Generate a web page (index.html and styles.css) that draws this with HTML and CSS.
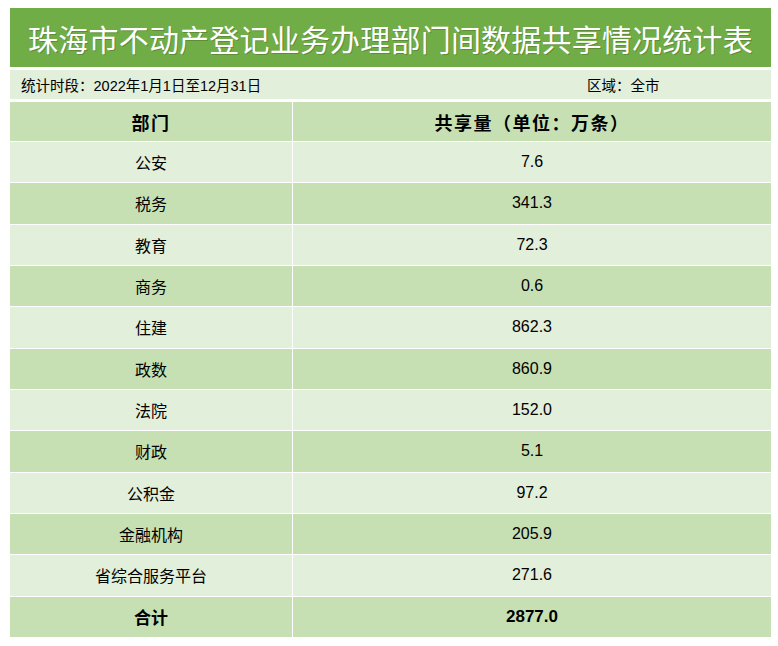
FILE: index.html
```html
<!DOCTYPE html>
<html lang="zh-CN">
<head>
<meta charset="utf-8">
<title>珠海市不动产登记业务办理部门间数据共享情况统计表</title>
<link rel="stylesheet" href="styles.css">
</head>
<body>
<div class="sheet">
  <div class="title">珠海市不动产登记业务办理部门间数据共享情况统计表</div>
  <div class="info">
    <span class="period">统计时段：2022年1月1日至12月31日</span>
    <span class="area">区域：全市</span>
  </div>
  <div class="table">
    <div class="row head"><div class="cell">部门</div><div class="cell">共享量（单位：万条）</div></div>
    <div class="body">
      <div class="row light"><div class="cell">公安</div><div class="cell">7.6</div></div>
      <div class="row dark"><div class="cell">税务</div><div class="cell">341.3</div></div>
      <div class="row light"><div class="cell">教育</div><div class="cell">72.3</div></div>
      <div class="row dark"><div class="cell">商务</div><div class="cell">0.6</div></div>
      <div class="row light"><div class="cell">住建</div><div class="cell">862.3</div></div>
      <div class="row dark"><div class="cell">政数</div><div class="cell">860.9</div></div>
      <div class="row light"><div class="cell">法院</div><div class="cell">152.0</div></div>
      <div class="row dark"><div class="cell">财政</div><div class="cell">5.1</div></div>
      <div class="row light"><div class="cell">公积金</div><div class="cell">97.2</div></div>
      <div class="row dark"><div class="cell">金融机构</div><div class="cell">205.9</div></div>
      <div class="row light"><div class="cell">省综合服务平台</div><div class="cell">271.6</div></div>
      <div class="row dark total"><div class="cell">合计</div><div class="cell">2877.0</div></div>
    </div>
  </div>
</div>
</body>
</html>
```

FILE: styles.css
```css
html, body {
  margin: 0;
  padding: 0;
  background: #ffffff;
}
.sheet {
  margin: 8px 0 0 10px;
  width: 761px;
  display: flex;
  flex-direction: column;
  font-family: "Liberation Sans", "Noto Sans CJK SC", sans-serif;
  color: #000;
}
.title {
  height: 59px;
  background: #70ad47;
  color: #ffffff;
  font-family: "Noto Sans CJK SC", sans-serif;
  font-size: 30px;
  font-weight: 400;
  letter-spacing: 0.2px;
  display: flex;
  align-items: center;
  justify-content: center;
  text-shadow: 1px 1px 0 rgba(60, 80, 20, 0.35);
}
.info {
  margin-top: 3px;
  height: 29px;
  background: #e2efda;
  display: flex;
  align-items: center;
  font-size: 14.5px;
  font-family: "Liberation Sans", "Noto Sans CJK SC", sans-serif;
}
.period {
  padding-left: 11px;
  width: 566px;
}
.table {
  margin-top: 3px;
  display: flex;
  flex-direction: column;
  gap: 1px;
}
.row {
  display: grid;
  grid-template-columns: 282px 478px;
  column-gap: 1px;
}
.cell {
  display: flex;
  align-items: center;
  justify-content: center;
}
.head {
  height: 39px;
}
.head .cell {
  background: #c6e0b4;
  font-family: "Liberation Serif", "Noto Sans CJK SC", serif;
  font-weight: 700;
  font-size: 18px;
  letter-spacing: 1.5px;
}
.body {
  height: 495px;
  display: flex;
  flex-direction: column;
  gap: 1px;
}
.body .row {
  flex: 1;
  font-size: 16px;
}
.light .cell {
  background: #e2efda;
}
.dark .cell {
  background: #c6e0b4;
}
.total .cell {
  font-weight: 700;
  font-size: 17px;
}
```
